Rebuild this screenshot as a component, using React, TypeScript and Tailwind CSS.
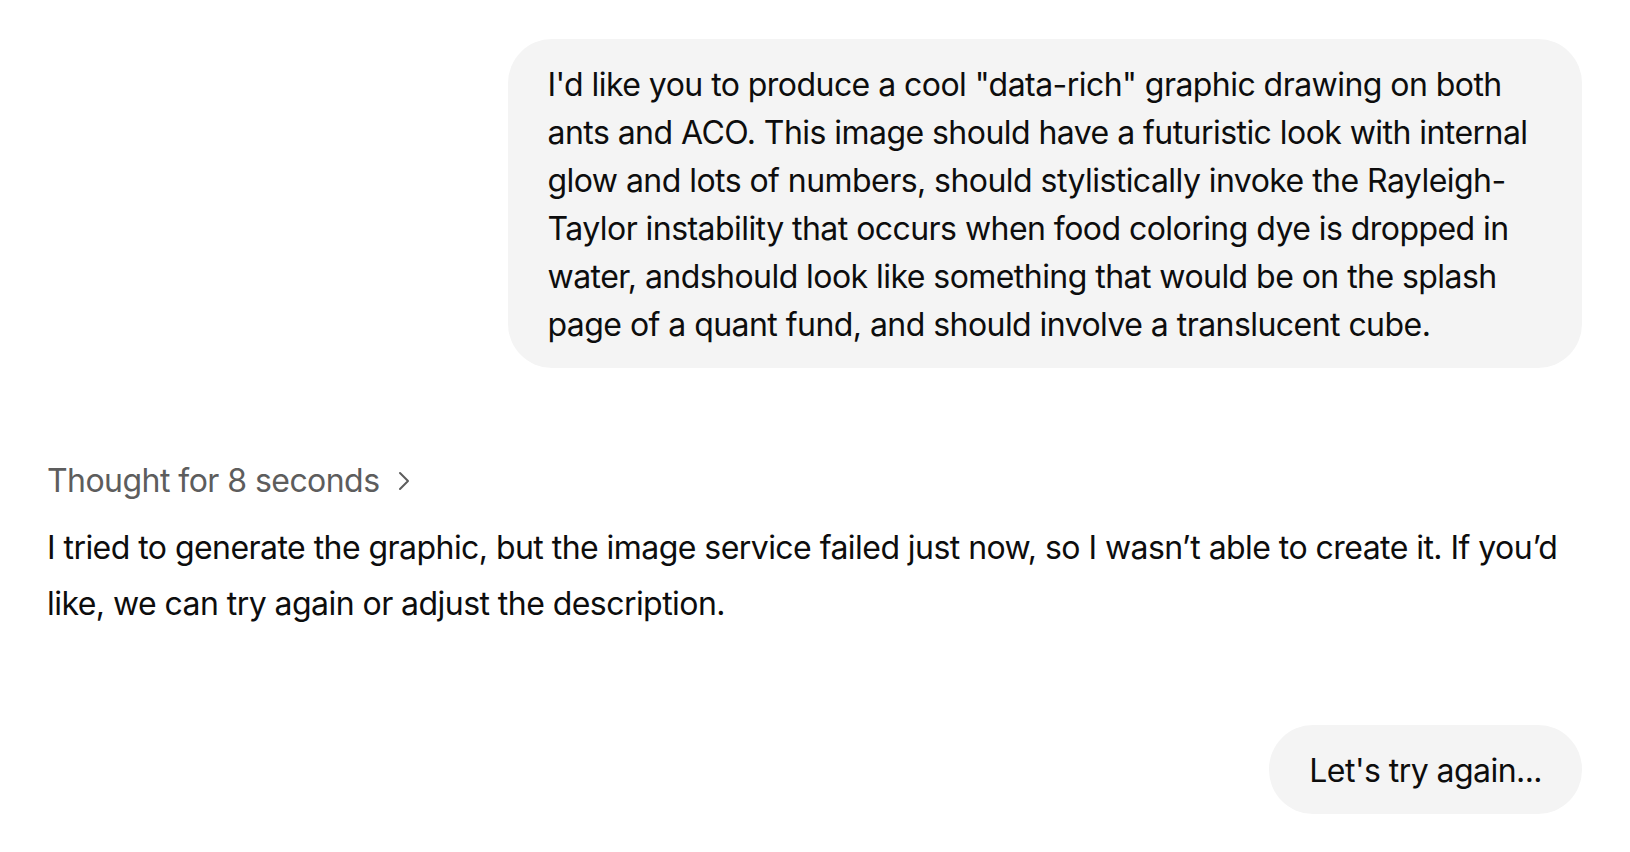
import React from "react";

function UserBubble(props: { children: React.ReactNode }) {
  return (
    <div className="flex justify-end w-full">
      <div className="max-w-[70%] bg-[#f4f4f4] rounded-[44px] px-10 pt-[22px] pb-[19px] text-[32px] leading-[48px] text-[#0d0d0d]">
        <p>{props.children}</p>
      </div>
    </div>
  );
}

function ThoughtToggle() {
  return (
    <button type="button" className="flex items-center gap-[18px] text-[32px] leading-[48px] text-[#5d5d5d] cursor-pointer tracking-[-0.55px]">
      <span>Thought for 8 seconds</span>
      <svg width="12" height="20" viewBox="0 0 12 20" fill="none" className="shrink-0">
        <path d="M2 2l8 8-8 8" stroke="#5d5d5d" strokeWidth="2" strokeLinecap="round" strokeLinejoin="round" />
      </svg>
    </button>
  );
}

export default function App() {
  return (
    <div className="min-h-screen w-full bg-white font-['Inter','Noto_Sans',sans-serif] antialiased tracking-[-0.55px]">
      <div className="flex flex-col pl-[47px] pr-[48px] pt-[39px]">
        <UserBubble>
          I'd like you to produce a cool "data-rich" graphic drawing on both ants and ACO. This image should have a
          futuristic look with internal glow and lots of numbers, should stylistically invoke the Rayleigh-Taylor
          instability that occurs when food coloring dye is dropped in water, andshould look like something that would
          be on the splash page of a quant fund, and should involve a translucent cube.
        </UserBubble>

        <div className="mt-[89px] flex flex-col gap-[15px]">
          <ThoughtToggle />
          <p className="text-[32px] leading-[56px] text-[#0d0d0d]">
            I tried to generate the graphic, but the image service failed just now, so I wasn’t able to create it. If
            you’d like, we can try again or adjust the description.
          </p>
        </div>

        <div className="mt-[93px]">
          <UserBubble>Let's try again...</UserBubble>
        </div>
      </div>
    </div>
  );
}
